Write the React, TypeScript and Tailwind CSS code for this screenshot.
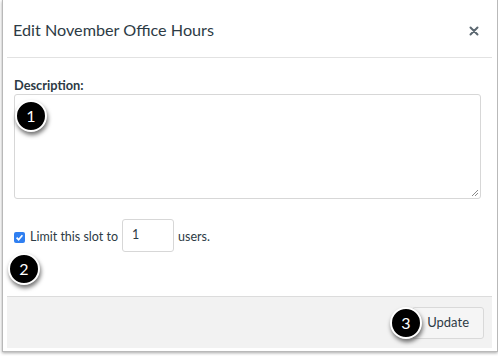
import React from "react";

const Badge = ({ n, className }: { n: number; className: string }) => (
  <div
    className={`absolute flex items-center justify-center w-[32px] h-[32px] rounded-full bg-black border-2 border-white text-white text-[16px] shadow-[1px_3px_4px_rgba(0,0,0,0.55)] ${className}`}
  >
    {n}
  </div>
);

const App: React.FC = () => {
  return (
    <div
      className="relative w-[498px] h-[356px] bg-white overflow-hidden text-[#2d3b45]"
      style={{ fontFamily: "Lato, 'Open Sans', sans-serif" }}
    >
      <div className="ml-[2px] w-[496px] h-[352px] flex flex-col bg-white border-l border-r border-b border-[#b9b9b9] shadow-[0_1px_3px_rgba(0,0,0,0.35)] pl-[4px] pr-[5px] pb-[3px]">
        <div className="h-[58px] flex items-center justify-between border-b border-[#e2e2e2] pl-[6px] pr-[13px] pt-[3px] shrink-0">
          <h1 className="text-[16.2px] leading-none">Edit November Office Hours</h1>
          <svg width="10" height="10" viewBox="0 0 10 10" className="mt-[1px]">
            <path d="M1.5 1.5 L8.5 8.5 M8.5 1.5 L1.5 8.5" stroke="#5b6770" strokeWidth="2" strokeLinecap="round" />
          </svg>
        </div>

        <div className="flex-1 pl-[7px] pr-[11px] pt-[21px]">
          <label className="block text-[12.8px] font-bold leading-none">Description:</label>
          <div className="relative mt-[2px] h-[105px] rounded-[3px] border border-[#d7d7d7] bg-white">
            <svg width="8" height="8" viewBox="0 0 8 8" className="absolute right-[1px] bottom-[1px]">
              <path d="M7 1 L1 7 M7 4 L4 7" stroke="#8a8a8a" strokeWidth="1" />
            </svg>
          </div>

          <div className="mt-[20px] flex items-center text-[12.5px]">
            <span className="mt-[5px] w-[11px] h-[11px] rounded-[2px] bg-[#2f7ff1] flex items-center justify-center">
              <svg width="9" height="9" viewBox="0 0 9 9">
                <path d="M1.6 4.7 L3.6 6.7 L7.4 2.2" stroke="white" strokeWidth="1.7" fill="none" />
              </svg>
            </span>
            <span className="ml-[5px] mt-[5px]">Limit this slot to</span>
            <div className="ml-[4px] w-[52px] h-[33px] rounded-[3px] border border-[#d7d7d7] pl-[9px] flex items-center text-[12.5px] leading-none">
              1
            </div>
            <span className="ml-[4px] mt-[5px]">users.</span>
          </div>
        </div>

        <div className="h-[52px] shrink-0 bg-[#f2f2f2] border-t border-[#dcdcdc] flex items-center justify-end pr-[8px]">
          <button className="h-[32px] px-[14px] rounded-[3px] border border-[#d9d9d9] bg-[#f5f5f5] text-[13px] text-[#2d3b45]">
            Update
          </button>
        </div>
      </div>

      <Badge n={1} className="left-[15px] top-[100px]" />
      <Badge n={2} className="left-[8px] top-[253px]" />
      <Badge n={3} className="left-[390px] top-[307px]" />
    </div>
  );
};

export default App;
